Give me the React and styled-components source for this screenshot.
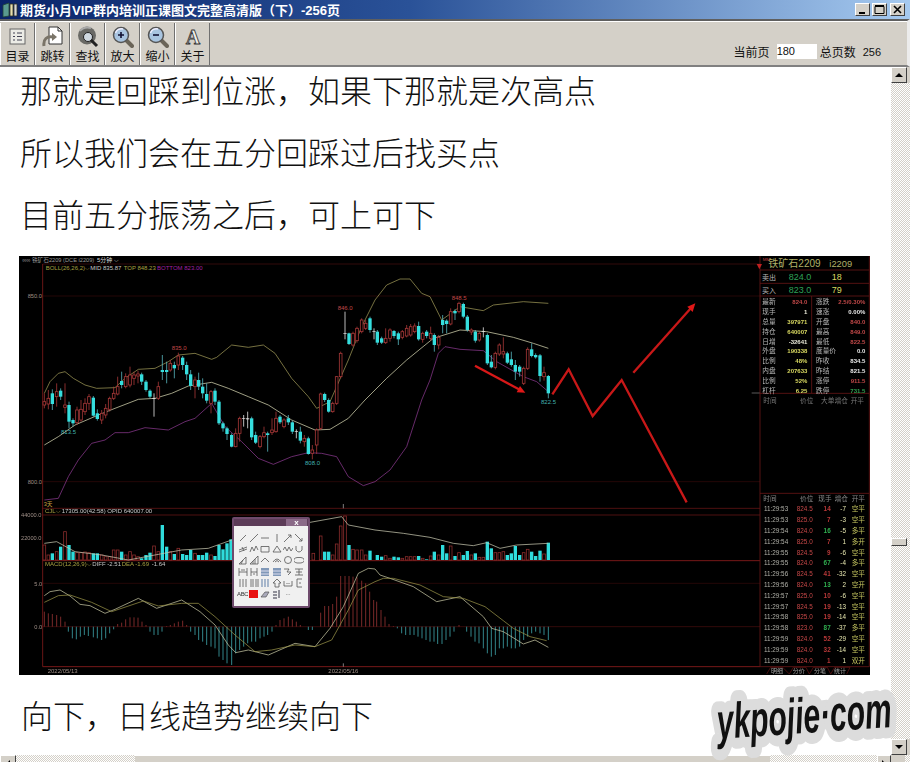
import React from 'react';
import styled, { createGlobalStyle } from 'styled-components';

const CJK = '"Liberation Sans", "Noto Sans CJK SC", sans-serif';

// candle data: [x, top, bottom, kind, high, low], in chart units (3 units = 1px)
const CANDLES_LEFT = [
  [88, 455, 465, 'r', 430, 475], [100, 445, 462, 'r', 420, 478], [112, 430, 462, 'c', 418, 480], [125, 425, 440, 'r', 400, 470],
  [137, 422, 440, 'c', 415, 450], [150, 465, 472, 'r', 400, 490], [162, 465, 515, 'c', 455, 535], [174, 510, 520, 'c', 505, 530],
  [186, 480, 518, 'r', 470, 525], [198, 478, 510, 'r', 450, 515], [210, 460, 485, 'r', 445, 495], [222, 440, 460, 'r', 432, 480],
  [235, 443, 497, 'c', 438, 500], [247, 490, 507, 'c', 478, 512], [260, 490, 510, 'r', 480, 522], [272, 475, 495, 'r', 462, 505],
  [284, 445, 478, 'r', 440, 485], [296, 430, 445, 'r', 410, 450], [308, 410, 432, 'r', 380, 436], [320, 393, 405, 'c', 365, 415],
  [332, 380, 410, 'r', 370, 415], [345, 375, 405, 'r', 350, 412], [357, 375, 385, 'r', 365, 405], [369, 372, 378, 'r', 362, 400],
  [380, 373, 395, 'c', 368, 405], [393, 395, 420, 'c', 390, 425], [405, 422, 440, 'c', 418, 445], [417, 444, 446, 'w', 430, 500],
  [430, 410, 445, 'r', 395, 450], [442, 360, 366, 'c', 315, 390], [455, 360, 366, 'c', 335, 400], [466, 340, 360, 'r', 330, 365],
  [478, 345, 355, 'c', 335, 385], [490, 318, 345, 'r', 308, 360], [503, 323, 345, 'c', 318, 360], [515, 345, 373, 'c', 335, 390],
  [527, 373, 408, 'c', 360, 420], [540, 390, 410, 'r', 380, 445], [551, 390, 410, 'c', 368, 420], [563, 410, 430, 'c', 385, 445],
  [575, 432, 452, 'c', 400, 460], [588, 425, 460, 'r', 420, 490], [600, 422, 455, 'c', 415, 465], [612, 455, 520, 'c', 450, 525],
  [624, 520, 535, 'c', 515, 545], [636, 535, 552, 'c', 530, 570], [650, 555, 590, 'c', 550, 592], [662, 550, 590, 'r', 535, 592],
  [674, 505, 550, 'r', 500, 575], [686, 504, 506, 'w', 495, 530], [698, 505, 508, 'w', 485, 535], [710, 505, 562, 'c', 500, 570],
  [722, 555, 578, 'c', 545, 582], [735, 560, 590, 'r', 555, 595], [747, 548, 560, 'r', 530, 565], [758, 550, 555, 'c', 545, 605],
  [771, 540, 548, 'r', 505, 555], [783, 505, 545, 'r', 485, 548], [795, 500, 517, 'c', 495, 522], [807, 510, 530, 'r', 505, 535],
  [820, 505, 517, 'c', 495, 525], [832, 517, 545, 'c', 512, 552], [844, 544, 546, 'w', 538, 565], [856, 545, 572, 'c', 530, 580],
  [868, 565, 575, 'r', 555, 590], [880, 565, 612, 'c', 560, 614], [892, 600, 610, 'r', 585, 628], [905, 540, 585, 'r', 535, 612],
  [917, 432, 535, 'r', 428, 540], [929, 432, 450, 'c', 428, 456], [941, 450, 485, 'c', 445, 488], [953, 460, 485, 'r', 455, 488],
  [965, 380, 460, 'r', 378, 465], [977, 310, 380, 'r', 305, 385], [990, 249, 251, 'w', 185, 268], [1002, 250, 282, 'c', 248, 285],
  [1014, 250, 285, 'r', 245, 290], [1026, 235, 272, 'r', 230, 278], [1040, 210, 245, 'r', 205, 250], [1052, 220, 235, 'r', 210, 240],
];

const CANDLES_RIGHT = [
  [0, 205, 240, 'c', 200, 248], [12, 244, 246, 'w', 235, 268], [22, 245, 278, 'c', 240, 285], [35, 265, 278, 'c', 260, 282],
  [47, 265, 278, 'r', 235, 282], [60, 240, 265, 'r', 235, 275], [72, 243, 258, 'c', 240, 265], [85, 250, 268, 'c', 245, 285],
  [97, 245, 262, 'r', 240, 268], [110, 235, 258, 'r', 225, 262], [122, 230, 255, 'r', 222, 260], [134, 228, 245, 'r', 220, 250],
  [146, 228, 268, 'c', 215, 272], [158, 250, 268, 'r', 245, 278], [170, 245, 258, 'c', 240, 265], [182, 250, 265, 'r', 230, 272],
  [193, 255, 285, 'c', 250, 305], [206, 262, 285, 'r', 255, 298], [218, 210, 225, 'c', 195, 250], [230, 212, 222, 'c', 208, 250],
  [242, 185, 222, 'r', 175, 226], [255, 183, 190, 'c', 178, 210], [267, 160, 185, 'r', 155, 190], [280, 162, 200, 'c', 158, 205],
  [292, 200, 240, 'c', 195, 245], [304, 240, 246, 'r', 235, 255], [316, 245, 272, 'c', 240, 278], [328, 250, 270, 'r', 245, 275],
  [340, 244, 246, 'w', 232, 262], [352, 255, 340, 'c', 250, 345], [364, 335, 352, 'c', 315, 355], [376, 310, 352, 'r', 305, 358],
  [388, 285, 312, 'r', 280, 318], [400, 305, 312, 'r', 262, 325], [412, 310, 338, 'c', 305, 342], [424, 328, 345, 'c', 305, 350],
  [436, 345, 365, 'c', 330, 390], [449, 350, 365, 'c', 345, 380], [461, 355, 400, 'r', 350, 405], [473, 298, 355, 'r', 292, 360],
  [485, 298, 318, 'c', 280, 322], [497, 315, 322, 'c', 310, 326], [510, 316, 378, 'c', 312, 395], [522, 368, 380, 'r', 350, 392],
  [535, 378, 430, 'c', 375, 445],
];

const VOLUMES_LEFT = [
  [88, 135, 'r'], [100, 165, 'r'], [112, 160, 'c'], [125, 155, 'r'], [137, 140, 'c'], [150, 95, 'r'], [162, 135, 'c'], [174, 155, 'c'],
  [186, 158, 'r'], [198, 158, 'r'], [210, 156, 'r'], [222, 158, 'r'], [235, 160, 'c'], [247, 160, 'c'], [260, 165, 'r'], [272, 170, 'r'],
  [284, 170, 'r'], [296, 150, 'r'], [308, 150, 'r'], [320, 155, 'c'], [332, 165, 'r'], [345, 155, 'r'], [357, 165, 'r'], [369, 170, 'r'],
  [380, 175, 'c'], [393, 165, 'c'], [405, 158, 'c'], [417, 138, 'r'], [430, 155, 'r'], [442, 75, 'c'], [455, 140, 'c'], [466, 155, 'r'],
  [478, 162, 'c'], [490, 145, 'r'], [503, 162, 'c'], [515, 165, 'c'], [527, 150, 'c'], [540, 160, 'r'], [551, 165, 'c'], [563, 165, 'c'],
  [575, 158, 'c'], [588, 165, 'r'], [600, 168, 'c'], [612, 135, 'c'], [624, 148, 'c'], [636, 130, 'c'], [648, 118, 'c'],
  [880, 150, 'r'], [895, 160, 'r'], [917, 108, 'r'], [929, 155, 'c'], [941, 155, 'c'], [953, 165, 'r'], [965, 132, 'r'], [977, 78, 'r'],
  [990, 48, 'r'], [1002, 135, 'c'], [1014, 148, 'r'], [1026, 150, 'r'], [1040, 150, 'r'], [1052, 165, 'r'],
];

const VOLUMES_RIGHT = [
  [0, 152, 'c'], [22, 165, 'c'], [35, 170, 'c'], [47, 167, 'r'], [60, 175, 'r'], [72, 170, 'c'], [85, 172, 'c'], [97, 175, 'r'],
  [110, 170, 'r'], [122, 170, 'r'], [134, 170, 'r'], [146, 168, 'c'], [158, 175, 'r'], [170, 178, 'c'], [182, 168, 'r'], [193, 155, 'c'],
  [206, 165, 'r'], [218, 135, 'c'], [230, 160, 'c'], [242, 138, 'r'], [255, 168, 'c'], [267, 158, 'r'], [280, 165, 'c'], [292, 153, 'c'],
  [304, 165, 'r'], [316, 160, 'c'], [328, 172, 'r'], [340, 172, 'r'], [352, 125, 'c'], [364, 145, 'c'], [376, 158, 'r'], [388, 158, 'r'],
  [400, 155, 'r'], [412, 165, 'c'], [424, 160, 'c'], [436, 138, 'c'], [449, 165, 'c'], [461, 158, 'r'], [473, 148, 'r'], [485, 155, 'c'],
  [497, 168, 'c'], [510, 152, 'c'], [522, 162, 'r'], [535, 128, 'c'],
];

const MACD_BARS = [
  [88, 335], [100, 340], [112, 342], [125, 345], [137, 350], [150, 365], [160, 395], [172, 415], [184, 418], [196, 410], [208, 405],
  [220, 408], [235, 412], [247, 415], [260, 420], [272, 415], [284, 400], [296, 388], [308, 372], [320, 368], [332, 358], [345, 352],
  [357, 352], [369, 353], [381, 365], [393, 375], [405, 395], [417, 405], [429, 405], [441, 395], [455, 378], [466, 375], [478, 370],
  [490, 365], [503, 362], [515, 375], [527, 395], [540, 405], [551, 420], [563, 425], [575, 435], [588, 440], [600, 445], [612, 470],
  [624, 480], [636, 490], [650, 495], [662, 460], [674, 450], [686, 440], [698, 430], [710, 425], [722, 425], [735, 415], [747, 410],
  [758, 405], [771, 395], [783, 375], [795, 360], [807, 355], [820, 350], [832, 358], [844, 365], [856, 375], [880, 390], [892, 390],
  [917, 338], [929, 318], [941, 318], [953, 312], [965, 290], [977, 228], [990, 228], [1002, 228], [1014, 230], [1026, 232], [1040, 242],
  [1052, 250], [1064, 275], [1076, 300], [1085, 305], [1098, 330], [1110, 350], [1122, 372], [1135, 378], [1147, 385], [1160, 400],
  [1172, 405], [1185, 405], [1197, 405], [1209, 410], [1221, 415], [1233, 420], [1245, 425], [1257, 425], [1268, 432], [1281, 432],
  [1293, 420], [1305, 410], [1317, 395], [1332, 375], [1355, 395], [1368, 410], [1380, 425], [1392, 430], [1405, 445], [1417, 460],
  [1429, 470], [1441, 465], [1453, 445], [1465, 445], [1477, 440], [1489, 445], [1501, 445], [1514, 440], [1526, 420], [1538, 410],
  [1550, 400], [1562, 395], [1575, 400], [1587, 405], [1600, 420],
];

const TOP_BAND = '88,430 105,395 130,370 150,365 175,385 210,405 245,415 300,413 330,385 370,358 420,355 460,335 490,315 540,310 590,328 605,322 650,285 700,292 745,285 780,310 830,385 880,440 905,475 945,455 1000,330 1040,230 1080,150 1115,105 1155,87 1185,87 1220,130 1245,140 1280,210 1335,170 1405,182 1435,165 1525,155 1600,160';
const MID_BAND = '88,585 130,560 180,525 250,495 300,475 370,448 420,445 470,430 520,408 590,397 640,415 700,440 760,465 830,510 900,540 945,538 1000,505 1050,450 1080,420 1115,385 1175,330 1255,265 1335,240 1415,245 1495,262 1555,280 1600,295';
const LOW_BAND = '88,750 130,745 160,680 190,630 230,580 270,570 300,548 340,548 390,533 460,540 510,515 540,505 590,460 630,530 680,575 730,625 775,643 830,620 880,608 920,610 965,620 1000,680 1045,707 1080,695 1125,660 1175,590 1220,450 1245,390 1270,310 1290,290 1335,298 1405,302 1445,335 1525,380 1565,395 1600,425';
const CJL_LINE = '88,130 125,125 180,155 260,165 340,180 420,165 500,150 580,145 650,120 880,68 980,50 1000,75 1080,90 1165,100 1245,112 1315,130 1375,137 1415,128 1455,145 1505,135 1600,130';
const DIFF_LINE = '88,287 105,275 135,270 165,288 195,313 225,317 270,340 300,328 370,295 425,325 500,300 555,335 600,375 640,435 662,458 700,450 760,465 840,430 900,440 945,385 985,320 1030,220 1060,205 1080,207 1095,225 1125,235 1195,260 1265,305 1335,290 1405,350 1430,385 1465,395 1525,432 1560,420 1600,442';
const DEA_LINE = '88,307 130,287 165,285 230,307 290,335 385,303 430,318 500,310 550,310 600,350 660,405 720,455 770,450 840,435 900,440 950,420 1000,330 1030,270 1080,245 1105,235 1135,235 1215,255 1285,290 1345,295 1410,320 1495,385 1545,410 1595,422';

const QUOTE_ROWS = [
  ['最新', '824.0', '#c04848', '涨跌', '2.5/0.30%', '#c04848'],
  ['现手', '1', '#e8e8d8', '速涨', '0.00%', '#e8e8e8'],
  ['总量', '397971', '#d8d860', '开盘', '840.0', '#c04848'],
  ['持仓', '640007', '#d8d860', '最高', '849.0', '#c04848'],
  ['日增', '-32641', '#e8e8d8', '最低', '822.5', '#c04848'],
  ['外盘', '190338', '#d8d860', '度量价', '0.0', '#e8e8e8'],
  ['比例', '48%', '#d8d860', '昨收', '834.5', '#e8e8e8'],
  ['内盘', '207633', '#d8d860', '昨结', '821.5', '#e8e8e8'],
  ['比例', '52%', '#d8d860', '涨停', '911.5', '#c04848'],
  ['杠杆', '6.25', '#d8d860', '跌停', '731.5', '#30a050'],
];

const TRADES = [
  ['11:29:53', '824.5', '14', '-7', '空平', 'r'], ['11:29:53', '825.0', '7', '-3', '空平', 'r'],
  ['11:29:54', '824.0', '16', '-5', '多平', 'g'], ['11:29:54', '825.0', '7', '1', '多开', 'r'],
  ['11:29:55', '824.5', '9', '-6', '空平', 'r'], ['11:29:55', '824.0', '67', '-4', '多平', 'g'],
  ['11:29:56', '824.5', '41', '-32', '空平', 'r'], ['11:29:56', '824.0', '13', '2', '空开', 'g'],
  ['11:29:57', '825.0', '10', '-6', '空平', 'r'], ['11:29:57', '824.5', '19', '-13', '空平', 'r'],
  ['11:29:58', '825.0', '19', '-14', '空平', 'r'], ['11:29:58', '823.0', '87', '-37', '多平', 'g'],
  ['11:29:59', '824.0', '52', '-29', '空平', 'r'], ['11:29:59', '824.0', '32', '-14', '空平', 'r'],
  ['11:29:59', '824.0', '1', '1', '双开', 'r'],
];

const PALETTE_ICONS = [
  'M2 8L8 2', 'M1 9L9 1', 'M1 5H9', 'M5 1V9', 'M1 9L8 2M5 2H8V5', 'M1 1L8 8M5 8H8V5',
  'M1 6L9 3M1 8L9 5M4 3L6 7', 'M1 8L3 3L5 7L7 2L9 6', 'M1 2.5H9V8H1Z', 'M5 2L9 8H1Z', 'M0 6L2 3L4 7L6 3L8 7L10 4', 'M2 2V6Q5 10 8 6V2',
  'M1 9L8 2V9ZM3 9L5 5', 'M1 9L9 1V9ZM4 9V6M6 9V4', 'M1 7L5 3L9 7', 'M1 7Q5 1 9 7M3 7Q5 4 7 7', 'M5 1.5A3.5 3.5 0 1 0 5 8.5A3.5 3.5 0 1 0 5 1.5Z', 'M5 2.5A4.5 2.8 0 1 0 5 8A4.5 2.8 0 1 0 5 2.5Z',
  'M1 1V9M9 1V9M1 5H9M3 3H7', 'M2 1V9M8 1V9M2 5H8M4 7H6', 'B', 'B', 'M1 2H6L4 5H8L5 8', 'M1 2H9M2 5H8M1 8H9M5 2V8',
  'M2 1V9M5 1V9M8 1V9', 'M2 1V9M4 1V9M7 1V9M9 1V9', 'L', 'M5 1L9 5H7V9H3V5H1Z', 'M1 3V8H9V3M4 5V6M6 5V6', 'M3 1H8M3 9H8M3 1V9M6 4V6',
];

const Global = createGlobalStyle`
  html, body { margin: 0; padding: 0; background: #fff; }
  body { font-family: ${CJK}; }
`;

const Page = styled.div`
  position: relative;
  width: 910px;
  height: 762px;
  overflow: hidden;
  display: flex;
  flex-direction: column;
  background: #d4d0c8;
`;

const TitleBar = styled.div`
  height: 19px;
  flex: none;
  display: flex;
  align-items: center;
  gap: 2px;
  padding-left: 2px;
  background: linear-gradient(90deg, #0a246a 0%, #2a5298 45%, #a6caf0 100%);
`;

const TitleText = styled.div`
  flex: 1;
  color: #fff;
  font-size: 13px;
  font-weight: bold;
  white-space: nowrap;
`;

const WindowButtons = styled.div`
  display: flex;
  gap: 2px;
  margin-right: 5px;
  & > button:nth-child(2) { margin-right: 1px; }
`;

const WindowButton = styled.button`
  width: 15px;
  height: 13px;
  padding: 0;
  display: flex;
  align-items: center;
  justify-content: center;
  background: #d4d0c8;
  border: 1px solid;
  border-color: #fff #404040 #404040 #fff;
`;

const ToolbarWrap = styled.div`
  height: 48px;
  flex: none;
  box-sizing: border-box;
  border-top: 2px solid #5f5f5f;
  border-bottom: 2px solid #808080;
  border-right: 3px solid #ececec;
  display: flex;
  background: #d4d0c8;
  box-shadow: inset 0 1px 0 #fff;
  padding-top: 2px;
`;

const ToolButton = styled.div`
  width: 35px;
  box-sizing: border-box;
  display: flex;
  flex-direction: column;
  align-items: center;
  justify-content: flex-end;
  border-right: 1px solid #707070;
  border-left: 1px solid #fff;
  font-size: 12px;
  line-height: 14px;
  color: #111;
  padding-bottom: 1px;
  svg { margin-bottom: 2px; }
`;

const PageInfo = styled.div`
  margin-left: auto;
  margin-right: 26px;
  align-self: flex-end;
  margin-bottom: 5px;
  display: flex;
  align-items: center;
  font-size: 12px;
  color: #111;
`;

const PageInput = styled.div`
  width: 40px;
  height: 15px;
  line-height: 15px;
  background: #fff;
  margin: 0 3px 0 7px;
  font-size: 11px;
  padding-left: 0;
`;

const PageTotal = styled.span`
  margin-left: 7px;
  font-size: 11px;
`;

const Middle = styled.div`
  flex: 1;
  min-height: 0;
  display: flex;
`;

const DocArea = styled.main`
  width: 891px;
  flex: none;
  background: #fff;
  overflow: hidden;
  padding: 1px 0 0 20px;
  box-sizing: border-box;
`;

const DocLine = styled.p`
  margin: 0 0 16px;
  padding-left: ${({ $indent }) => $indent || 0}px;
  height: 46px;
  line-height: 43px;
  font-family: "Noto Sans CJK SC", sans-serif;
  font-weight: 300;
  font-size: 32px;
  color: #111;
  white-space: nowrap;
`;

const ChartFrame = styled.div`
  position: relative;
  width: 851px;
  height: 419px;
  margin: 18px 0 18px -1px;
  background: #000;
`;

const ChartSvg = styled.svg`
  display: block;
  filter: blur(0.35px);
`;

const ChartText = styled.text`
  font-family: ${CJK};
  font-size: ${({ $size }) => $size || 20}px;
`;

const Palette = styled.div`
  position: absolute;
  left: 213px;
  top: 261px;
  width: 78px;
  height: 91px;
  box-sizing: border-box;
  border: 2px solid #6e4a6c;
  border-radius: 2px;
  background: #5c3c58;
  display: flex;
  flex-direction: column;
  filter: blur(0.3px);
`;

const PaletteHead = styled.div`
  height: 6px;
  flex: none;
  display: flex;
  justify-content: flex-end;
`;

const PaletteClose = styled.div`
  width: 21px;
  height: 7px;
  line-height: 7px;
  margin-right: 1px;
  text-align: center;
  background: #8a6a88;
  color: #fff;
  font-size: 8px;
  font-weight: bold;
`;

const PaletteBody = styled.div`
  flex: 1;
  margin-top: 1px;
  background: #f0f0f0;
  display: grid;
  grid-template-columns: repeat(6, 11.3px);
  grid-auto-rows: 11.3px;
  padding: 6px 0 0 3px;
`;

const PaletteCell = styled.div`
  display: flex;
  align-items: center;
  justify-content: center;
  font-size: 6px;
  color: #333;
  letter-spacing: -0.4px;
  overflow: hidden;
`;

const Swatch = styled.div`
  width: 9px;
  height: 8px;
  background: #e81010;
`;

const ScrollColumn = styled.aside`
  flex: 1;
  display: flex;
  flex-direction: column;
`;

const Dither = styled.div`
  background-color: #fff;
  background-image: repeating-conic-gradient(#d4d0c8 0 25%, #fff 0 50%);
  background-size: 2px 2px;
`;

const VTrack = styled(Dither)`
  flex: 1;
  display: flex;
  flex-direction: column;
`;

const VThumb = styled.div`
  width: 16px;
  height: 8px;
  box-sizing: border-box;
  margin-top: 455px;
  background: #d4d0c8;
  border: 1px solid;
  border-color: #fff #404040 #404040 #fff;
`;

const ArrowButton = styled.div`
  width: ${({ $w }) => $w || 16}px;
  height: ${({ $h }) => $h || 16}px;
  flex: none;
  box-sizing: border-box;
  display: flex;
  align-items: center;
  justify-content: center;
  background: #d4d0c8;
  border: 1px solid;
  border-color: #fff #404040 #404040 #fff;
`;

const HScrollBar = styled.div`
  height: 7px;
  flex: none;
  display: flex;
  overflow: hidden;
`;

const HDither = styled(Dither)`
  width: ${({ $w }) => $w}px;
  flex: none;
`;

const HThumb = styled.div`
  width: 635px;
  flex: none;
  box-sizing: border-box;
  background: #d4d0c8;
  border-top: 1px solid #fff;
`;

const Corner = styled(Dither)`
  flex: 1;
  margin-left: 14px;
`;

const Watermark = styled.svg`
  position: absolute;
  left: 695px;
  top: 672px;
`;

const WatermarkText = styled.text`
  font-family: "Liberation Sans", sans-serif;
  font-weight: bold;
  font-style: italic;
  font-size: 50px;
  fill: #111;
  stroke: #dcdcdc;
  stroke-width: 22px;
  stroke-linejoin: round;
  paint-order: stroke fill;
`;

const Arrow = ({ points }) => (
  <svg width="8" height="6" viewBox="0 0 8 6"><polygon points={points} fill="#000" /></svg>
);

const Lens = ({ sign }) => (
  <svg width="22" height="22" viewBox="0 0 22 22">
    <line x1="13" y1="13" x2="20" y2="20" stroke="#6a6458" strokeWidth="4" strokeLinecap="round" />
    <circle cx="9" cy="9" r="7.5" fill="#a8c4e0" stroke="#555" strokeWidth="1.5" />
    <path d="M3.5 7A6 6 0 0 1 11 3" fill="none" stroke="#eef" strokeWidth="1.5" />
    <path d={sign === '+' ? 'M6 9H12M9 6V12' : 'M6 9H12'} stroke="#113" strokeWidth="1.6" />
  </svg>
);

const TOOLS = [
  ['目录', (
    <svg width="22" height="22" viewBox="0 0 22 22" key="a">
      <rect x="3" y="3" width="15" height="15" fill="#ecece6" stroke="#666" />
      <path d="M6 7H8M10 7H15M6 10.5H8M10 10.5H15M6 14H8M10 14H15" stroke="#445" />
    </svg>
  )],
  ['跳转', (
    <svg width="22" height="22" viewBox="0 0 22 22" key="b">
      <path d="M7 1H16L20 5V18H7Z" fill="#fff" stroke="#333" />
      <path d="M16 1V5H20" fill="none" stroke="#333" />
      <path d="M2 20C1 13 5 10 11 11" fill="none" stroke="#7a7468" strokeWidth="3" />
      <path d="M10 7L15 11L10 15Z" fill="#7a7468" />
    </svg>
  )],
  ['查找', (
    <svg width="22" height="22" viewBox="0 0 22 22" key="c">
      <circle cx="10" cy="9.5" r="9" fill="#6a6a66" />
      <circle cx="11" cy="11" r="4.5" fill="#cfd8e0" stroke="#222" />
      <path d="M3 5Q7 0 14 2" stroke="#aaa" strokeWidth="2" fill="none" />
      <line x1="14" y1="14" x2="20" y2="20" stroke="#222" strokeWidth="3" />
    </svg>
  )],
  ['放大', <Lens sign="+" key="d" />],
  ['缩小', <Lens sign="-" key="e" />],
  ['关于', (
    <svg width="22" height="22" viewBox="0 0 22 22" key="f">
      <text x="11" y="18" textAnchor="middle" fontFamily="Liberation Serif, serif" fontWeight="bold" fontSize="20" fill="#eeeeea" stroke="#333" strokeWidth="0.8">A</text>
    </svg>
  )],
];

const Candle = ({ c: [x, top, bottom, kind, high, low] }) => {
  const color = kind === 'c' ? '#35dede' : kind === 'r' ? '#a83838' : '#e8e8e8';
  const wick = kind === 'r' ? '#a83838' : kind === 'c' ? '#58b8c0' : '#e8e8e8';
  return (
    <g>
      <line x1={x} x2={x} y1={high} y2={low} stroke={wick} strokeWidth="2.4" />
      {kind === 'r'
        ? <rect x={x - 4} y={top} width="8" height={bottom - top} fill="#000" stroke={color} strokeWidth="2.4" />
        : <rect x={x - 5} y={top} width="10" height={bottom - top} fill={color} />}
    </g>
  );
};

const VolumeBar = ({ v: [x, top, kind] }) => (kind === 'c'
  ? <rect x={x - 5} y={top} width="10" height={180 - top} fill="#2fdcdc" />
  : <rect x={x - 4} y={top} width="8" height={180 - top} fill="#000" stroke="#8a2c2c" strokeWidth="2.4" />);

const CurveLine = ({ points, color, width }) => (
  <polyline points={points} fill="none" stroke={color} strokeWidth={width || 2.2} strokeLinejoin="round" />
);

const RedLine = ({ y, color, x2 }) => (
  <line x1="83" x2={x2 || 2235} y1={y} y2={y} stroke={color || '#2a0808'} strokeWidth="2.6" />
);

const QuotePanel = () => (
  <g transform="translate(2175 0)">
    <rect x="60" y="18" width="328" height="1257" fill="#000" />
    <path d="M60 18V1250M388 18V1250M60 60H388M60 100H388M60 138H388M60 430H388M60 730H388M60 1250H388M215 138V430" stroke="#6a1616" strokeWidth="2.4" fill="none" />
    <path d="M50 42L66 42L58 58Z" fill="#c02020" />
    <ChartText x="68" y="34" $size={13} fill="#c04040">MM</ChartText>
    <ChartText x="85" y="51" $size={30} fill="#b0b068">铁矿石2209</ChartText>
    <ChartText x="268" y="51" $size={28} fill="#b0b068">i2209</ChartText>
    <ChartText x="66" y="90" $size={21} fill="#b8b8b8">卖出</ChartText>
    <ChartText x="146" y="91" $size={27} fill="#2ea058">824.0</ChartText>
    <ChartText x="275" y="91" $size={27} fill="#d8d860">18</ChartText>
    <ChartText x="66" y="128" $size={21} fill="#b8b8b8">买入</ChartText>
    <ChartText x="146" y="129" $size={27} fill="#2ea058">823.0</ChartText>
    <ChartText x="275" y="129" $size={27} fill="#d8d860">79</ChartText>
    {QUOTE_ROWS.map((r, i) => (
      <g key={i} transform={`translate(0 ${161 + i * 29.9})`}>
        <ChartText x="67" $size={20} fill="#b8b8b8">{r[0]}</ChartText>
        <ChartText x="202" textAnchor="end" $size={18} fontWeight="bold" fill={r[2]}>{r[1]}</ChartText>
        <ChartText x="228" $size={20} fill="#b8b8b8">{r[3]}</ChartText>
        <ChartText x="376" textAnchor="end" $size={18} fontWeight="bold" fill={r[5]}>{r[4]}</ChartText>
      </g>
    ))}
    {[['时间', 70], ['价位', 180], ['大单', 243], ['增仓', 284], ['开平', 332]].map(([t, x]) => (
      <ChartText key={t} x={x} y="460" $size={20} fill="#777">{t}</ChartText>
    ))}
    {[['时间', 70], ['价位', 180], ['现手', 235], ['增仓', 284], ['开平', 335]].map(([t, x]) => (
      <ChartText key={t} x={x} y="752" $size={20} fill="#888">{t}</ChartText>
    ))}
    {TRADES.map((t, i) => (
      <g key={i} transform={`translate(0 ${784 + i * 32.4})`}>
        <ChartText x="72" $size={19} fill="#b0b0a8">{t[0]}</ChartText>
        <ChartText x="218" textAnchor="end" $size={19} fill="#c84848">{t[1]}</ChartText>
        <ChartText x="272" textAnchor="end" $size={19} fontWeight="bold" fill={t[5] === 'g' ? '#30b050' : '#b83838'}>{t[2]}</ChartText>
        <ChartText x="318" textAnchor="end" $size={19} fill="#e8e8b0">{t[3]}</ChartText>
        <ChartText x="335" $size={20} fill="#c8c860">{t[4]}</ChartText>
      </g>
    ))}
    <path d="M80 1272L92 1252H128M128 1252L148 1272M148 1272L160 1252H198L208 1272L220 1252H262L272 1272L284 1252H330L320 1272" stroke="#6a1616" strokeWidth="2" fill="none" />
    {[['明细', 93], ['分价', 158], ['分笔', 222], ['统计', 282]].map(([t, x]) => (
      <ChartText key={t} x={x} y="1268" $size={18} fill="#a0a0a0">{t}</ChartText>
    ))}
  </g>
);

const Chart = () => (
  <ChartSvg width="851" height="419" viewBox="12 18 2553 1257">
    <rect x="12" y="18" width="2553" height="1257" fill="#000" />
    <ChartText x="22" y="36" $size={17} fill="#9a9a9a">∞∞ 铁矿石2209  (DCE  i2209)</ChartText>
    <ChartText x="246" y="37" $size={18} fill="#d8d8d8">5分钟 ⌵</ChartText>

    <RedLine y={42} color="#3a0c0c" />
    <RedLine y={138} />
    <RedLine y={695} />
    <RedLine y={775} color="#5a1212" />
    <RedLine y={795} color="#5a1212" />
    <RedLine y={932} color="#8a1c1c" />
    <RedLine y={1000} />
    <RedLine y={1130} color="#3a0c0c" />
    <RedLine y={1250} color="#8a1c1c" />
    <line x1="83" x2="83" y1="42" y2="1250" stroke="#7a1a1a" strokeWidth="2.6" />

    <ChartText x="92" y="60" $size={18} fill="#a8a040">BOLL(26,26,2)⌵</ChartText>
    <ChartText x="226" y="60" $size={18} fill="#c8c8c8">MID 835.87</ChartText>
    <ChartText x="326" y="60" $size={18} fill="#a8a040">TOP 848.23</ChartText>
    <ChartText x="426" y="60" $size={18} fill="#a020a0">BOTTOM 823.00</ChartText>

    <ChartText x="38" y="145" $size={17} fill="#a09088">850.0</ChartText>
    <ChartText x="38" y="702" $size={17} fill="#a09088">800.0</ChartText>
    <ChartText x="86" y="768" $size={17} fill="#c8a040">3天</ChartText>
    <ChartText x="470" y="300" $size={18} fill="#c04848">835.0</ChartText>
    <ChartText x="138" y="551" $size={18} fill="#40b0b0">813.5</ChartText>
    <ChartText x="870" y="644" $size={18} fill="#40b0b0">808.0</ChartText>
    <ChartText x="968" y="179" $size={18} fill="#c04848">846.0</ChartText>
    <ChartText x="1310" y="150" $size={18} fill="#c04848">848.5</ChartText>
    <ChartText x="1578" y="462" $size={18} fill="#40b0b0">822.5</ChartText>

    <CurveLine points={TOP_BAND} color="#a09a58" />
    <CurveLine points={MID_BAND} color="#d8d8b4" />
    <CurveLine points={LOW_BAND} color="#8c3a90" />
    {CANDLES_LEFT.map((c, i) => <Candle key={i} c={c} />)}
    <g transform="translate(1065 0)">
      {CANDLES_RIGHT.map((c, i) => <Candle key={i} c={c} />)}
      <path d="M315 347L455 422" stroke="#d81818" strokeWidth="7" />
      <path d="M466 428L440 427L450 408Z" fill="#e01818" />
      <polyline points="547,433 596,358 668,498 755,390 950,757" fill="none" stroke="#c81818" strokeWidth="7" />
      <path d="M790 368L965 172" stroke="#c81818" strokeWidth="7" />
      <path d="M976 160L952 170L968 186Z" fill="#e01818" />
    </g>

    <g transform="translate(0 750)">
      <ChartText x="18" y="52" $size={17} fill="#a09088">44000.0</ChartText>
      <ChartText x="18" y="120" $size={17} fill="#a09088">22000.0</ChartText>
      <ChartText x="58" y="258" $size={17} fill="#a09088">5.0</ChartText>
      <ChartText x="58" y="386" $size={17} fill="#a09088">0.0</ChartText>
      <ChartText x="90" y="40" $size={18} fill="#a8a040">CJL⌵</ChartText>
      <ChartText x="140" y="40" $size={18} fill="#c8c8c8">17305.00(42:58)  OPID 640007.00</ChartText>
      <ChartText x="90" y="197" $size={18} fill="#a8a040">MACD(12,26,9)⌵</ChartText>
      <ChartText x="232" y="197" $size={18} fill="#c8c8c8">DIFF -2.51</ChartText>
      <ChartText x="320" y="197" $size={18} fill="#a8a040">DEA -1.69</ChartText>
      <ChartText x="410" y="197" $size={18} fill="#c8c8c8">-1.64</ChartText>
      <ChartText x="98" y="520" $size={18} fill="#a09088">2022/05/13</ChartText>
      <ChartText x="940" y="520" $size={18} fill="#a09088">2022/05/16</ChartText>
      <line x1="985" x2="985" y1="490" y2="500" stroke="#bbb" strokeWidth="2" />
      <line x1="985" x2="985" y1="12" y2="25" stroke="#bbb" strokeWidth="2" />

      {VOLUMES_LEFT.map((v, i) => <VolumeBar key={i} v={v} />)}
      <g transform="translate(1065 0)">
        {VOLUMES_RIGHT.map((v, i) => <VolumeBar key={i} v={v} />)}
      </g>
      <CurveLine points={CJL_LINE} color="#c8c8b0" />

      {MACD_BARS.map(([x, y], i) => (
        <line key={i} x1={x} x2={x} y1="380" y2={y} stroke={y < 380 ? '#8c3030' : '#3a9aa0'} strokeWidth="2.6" />
      ))}
      <CurveLine points={DIFF_LINE} color="#c8c8a4" />
      <CurveLine points={DEA_LINE} color="#9a9448" />
    </g>

    <line x1="2210" x2="2235" y1="429" y2="429" stroke="#888" strokeWidth="2" />
    <QuotePanel />
  </ChartSvg>
);

const PaletteTool = () => (
  <Palette>
    <PaletteHead><PaletteClose>x</PaletteClose></PaletteHead>
    <PaletteBody>
      {PALETTE_ICONS.map((d, i) => (
        <PaletteCell key={i}>
          {d === 'B' && <svg width="10" height="10" viewBox="0 0 10 10"><rect x="1" y="1" width="8" height="8" fill="#8098b8" /><path d="M1 4H9M1 7H9" stroke="#dde" /></svg>}
          {d === 'L' && <svg width="10" height="10" viewBox="0 0 10 10"><path d="M2 1V9M5 1V9M8 1V9" stroke="#8098b8" strokeWidth="1.3" /></svg>}
          {d !== 'B' && d !== 'L' && <svg width="10" height="10" viewBox="0 0 10 10"><path d={d} fill="none" stroke="#555" strokeWidth="0.8" /></svg>}
        </PaletteCell>
      ))}
      <PaletteCell>ABC</PaletteCell>
      <PaletteCell><Swatch /></PaletteCell>
      <PaletteCell><svg width="10" height="10" viewBox="0 0 10 10"><path d="M1 8L5 3H9L6 8Z" fill="#aab" stroke="#555" strokeWidth="0.7" /></svg></PaletteCell>
      <PaletteCell><svg width="10" height="10" viewBox="0 0 10 10"><path d="M1 3H5M1 6H5M1 9H5M7 1V9" stroke="#334" strokeWidth="1" /></svg></PaletteCell>
      <PaletteCell>···</PaletteCell>
    </PaletteBody>
  </Palette>
);

const App = () => (
  <Page>
    <Global />
    <TitleBar>
      <svg width="16" height="16" viewBox="0 0 16 16">
        <path d="M1 3L7 1V14L1 15Z" fill="#5a9a90" stroke="#243" strokeWidth="0.8" />
        <path d="M8 2H11V14H8Z" fill="#e8e0b0" stroke="#332" strokeWidth="0.8" />
        <path d="M12 2H15V14H12Z" fill="#d8d8d8" stroke="#332" strokeWidth="0.8" />
      </svg>
      <TitleText>期货小月VIP群内培训正课图文完整高清版（下）-256页</TitleText>
      <WindowButtons>
        <WindowButton aria-label="minimize"><svg width="9" height="9" viewBox="0 0 9 9"><rect x="1" y="7" width="6" height="2" fill="#000" /></svg></WindowButton>
        <WindowButton aria-label="maximize"><svg width="11" height="9" viewBox="0 0 11 9"><path d="M1 1.5H10V8.5H1Z" fill="none" stroke="#000" /><rect x="1" y="0" width="9" height="2" fill="#000" /></svg></WindowButton>
        <WindowButton aria-label="close"><svg width="9" height="9" viewBox="0 0 9 9"><path d="M1 1L8 8M8 1L1 8" stroke="#000" strokeWidth="1.6" /></svg></WindowButton>
      </WindowButtons>
    </TitleBar>
    <ToolbarWrap>
      {TOOLS.map(([label, icon]) => (
        <ToolButton key={label}>{icon}{label}</ToolButton>
      ))}
      <PageInfo>
        当前页
        <PageInput>180</PageInput>
        总页数
        <PageTotal>256</PageTotal>
      </PageInfo>
    </ToolbarWrap>
    <Middle>
      <DocArea>
        <DocLine>那就是回踩到位涨，如果下那就是次高点</DocLine>
        <DocLine>所以我们会在五分回踩过后找买点</DocLine>
        <DocLine>目前五分振荡之后，可上可下</DocLine>
        <ChartFrame>
          <Chart />
          <PaletteTool />
        </ChartFrame>
        <DocLine $indent={1}>向下，日线趋势继续向下</DocLine>
      </DocArea>
      <ScrollColumn>
        <ArrowButton><Arrow points="4,1 8,5 0,5" /></ArrowButton>
        <VTrack><VThumb /></VTrack>
        <ArrowButton><Arrow points="0,1 8,1 4,5" /></ArrowButton>
      </ScrollColumn>
    </Middle>
    <HScrollBar>
      <ArrowButton $w={16} $h={16}><Arrow points="6,0 6,8 2,4" /></ArrowButton>
      <HDither $w={119} />
      <HThumb />
      <HDither $w={107} />
      <ArrowButton $w={14} $h={16}><Arrow points="2,0 2,8 6,4" /></ArrowButton>
      <Corner />
    </HScrollBar>
    <Watermark width="215" height="90" viewBox="0 0 215 90">
      <WatermarkText transform="translate(23 67) rotate(-4) scale(0.6 1)">ykpojie·com</WatermarkText>
    </Watermark>
  </Page>
);

export default App;
